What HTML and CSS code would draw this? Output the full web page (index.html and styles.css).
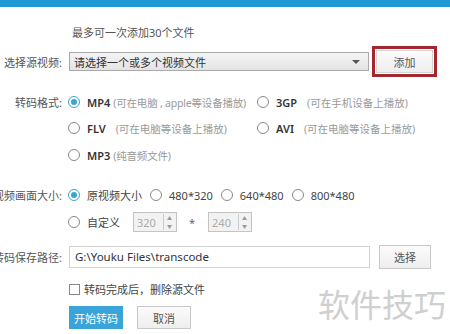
FILE: index.html
```html
<!DOCTYPE html>
<html lang="zh-CN">
<head>
  <meta charset="UTF-8">
  <title>视频转码</title>
  <link rel="stylesheet" href="styles.css">
</head>
<body>

  <div class="barre-haut"></div>

  <div class="page">
    <!-- indication -->
    <div class="ligne ligne-info">
      <span class="libelle"></span>
      <span class="info">最多可一次添加30个文件</span>
    </div>

    <!-- source -->
    <div class="ligne ligne-source">
      <span class="libelle">选择源视频:</span>
      <div class="select">
        <span>请选择一个或多个视频文件</span>
        <span class="fleche"></span>
      </div>
      <div class="cadre-rouge">
        <button class="btn btn-ajout">添加</button>
      </div>
    </div>

    <!-- formats -->
    <div class="ligne ligne-format">
      <span class="libelle">转码格式:</span>
      <div class="choix col1"><span class="radio coche"></span><b>MP4</b><em class="serre">(可在电脑 , apple等设备播放)</em></div>
      <div class="choix"><span class="radio"></span><b>3GP</b><em>(可在手机设备上播放)</em></div>
    </div>
    <div class="ligne ligne-format l2">
      <span class="libelle"></span>
      <div class="choix col1"><span class="radio"></span><b>FLV</b><em>(可在电脑等设备上播放)</em></div>
      <div class="choix"><span class="radio"></span><b>AVI</b><em>(可在电脑等设备上播放)</em></div>
    </div>
    <div class="ligne ligne-format l3">
      <span class="libelle"></span>
      <div class="choix col1"><span class="radio"></span><b>MP3</b><em class="serre">(纯音频文件)</em></div>
    </div>

    <!-- taille -->
    <div class="ligne ligne-taille">
      <span class="libelle">视频画面大小:</span>
      <div class="choix"><span class="radio coche"></span>原视频大小</div>
      <div class="choix"><span class="radio"></span>480*320</div>
      <div class="choix"><span class="radio"></span>640*480</div>
      <div class="choix"><span class="radio"></span>800*480</div>
    </div>
    <div class="ligne ligne-perso">
      <span class="libelle"></span>
      <div class="choix"><span class="radio"></span>自定义</div>
      <div class="spin"><span>320</span><span class="fleches"><i>▲</i><i>▼</i></span></div>
      <span class="fois">*</span>
      <div class="spin"><span>240</span><span class="fleches"><i>▲</i><i>▼</i></span></div>
    </div>

    <!-- chemin -->
    <div class="ligne ligne-chemin">
      <span class="libelle">转码保存路径:</span>
      <div class="champ">G:\Youku Files\transcode</div>
      <button class="btn btn-choisir">选择</button>
    </div>

    <div class="ligne ligne-case">
      <span class="libelle"></span>
      <span class="case"></span>
      <span>转码完成后，删除源文件</span>
    </div>

    <div class="ligne ligne-actions">
      <span class="libelle"></span>
      <button class="btn btn-go">开始转码</button>
      <button class="btn btn-annuler">取消</button>
    </div>
  </div>

  <div class="filigrane">软件技巧</div>

</body>
</html>
```

FILE: styles.css
```css
body {
  margin: 0;
  padding: 0;
  background-color: white;
  color: #444;
  font-family: "Noto Sans", "Noto Sans CJK SC", sans-serif;
  font-size: 11px;
  overflow: hidden;
  position: relative;
  height: 334px;
}

.barre-haut {
  height: 7px;
  background-color: #1d9ad6;
}

.ligne {
  display: flex;
  align-items: center;
  white-space: nowrap;
}

.libelle {
  width: 62px;
  flex-shrink: 0;
  display: flex;
  justify-content: flex-end;
  margin-right: 7px;
  color: #555;
}

.ligne-info {
  margin-top: 18px;
  height: 14px;
}

.info {
  margin-left: 3px;
  color: #555;
}

/* source */
.ligne-source {
  margin-top: 7px;
  height: 31px;
}

.select {
  width: 300px;
  height: 19px;
  box-sizing: border-box;
  border: 1px solid #a9a9a9;
  background: linear-gradient(#f4f4f4, #e4e4e4);
  display: flex;
  align-items: center;
  justify-content: space-between;
  padding: 0 8px 0 4px;
  color: #333;
}

.fleche {
  width: 0;
  height: 0;
  border-left: 4px solid transparent;
  border-right: 4px solid transparent;
  border-top: 4px solid #555;
}

.cadre-rouge {
  margin-left: 3px;
  width: 65px;
  height: 31px;
  box-sizing: border-box;
  border: 3px solid #a3272d;
  padding: 1px;
  display: flex;
}

.btn {
  font-family: inherit;
  font-size: 11px;
  border: 1px solid #c8c8c8;
  background: linear-gradient(#fbfbfb, #eeeeee);
  color: #555;
  padding: 0;
  cursor: pointer;
}

.btn-ajout {
  flex: 1;
  border-color: #d4d4d4;
}

/* formats */
.ligne-format {
  margin-top: 15px;
  height: 20px;
}

.ligne-format.l2 {
  margin-top: 6px;
}

.ligne-format.l3 {
  margin-top: 7px;
}

.choix {
  display: flex;
  align-items: center;
  color: #444;
}

.col1 {
  width: 189px;
}

.choix b {
  font-weight: 600;
  color: #333;
}

.choix em {
  font-style: normal;
  color: #9a9a9a;
  margin-left: 10px;
  font-size: 10.5px;
}

.choix em.serre {
  margin-left: 3px;
  letter-spacing: -0.2px;
}

.radio {
  width: 12px;
  height: 12px;
  box-sizing: border-box;
  border: 1px solid #888;
  border-radius: 50%;
  margin-left: -1px;
  margin-right: 7px;
  display: flex;
  align-items: center;
  justify-content: center;
  flex-shrink: 0;
}

.radio.coche {
  border-color: #3aa3d6;
}

.radio.coche::after {
  content: "";
  width: 6px;
  height: 6px;
  border-radius: 50%;
  background-color: #3aa3d6;
}

/* taille */
.ligne-taille {
  margin-top: 20px;
  height: 20px;
  gap: 9px;
}

.ligne-taille .libelle {
  margin-right: -2px;
}

.ligne-perso {
  margin-top: 7px;
  height: 20px;
}

.spin {
  margin-left: 13px;
  width: 44px;
  height: 20px;
  box-sizing: border-box;
  border: 1px solid #c4c4c4;
  background-color: #f2f2f2;
  color: #aaa;
  display: flex;
  align-items: center;
  justify-content: space-between;
  padding-left: 3px;
}

.fleches {
  width: 11px;
  height: 16px;
  border-left: 1px solid #ccc;
  display: flex;
  flex-direction: column;
  margin-right: 1px;
}

.fleches i {
  font-style: normal;
  font-size: 5px;
  line-height: 8px;
  text-align: center;
  color: #999;
}

.fois {
  margin-left: 12px;
  color: #666;
}

/* chemin */
.ligne-chemin {
  margin-top: 12px;
  height: 25px;
}

.champ {
  width: 301px;
  height: 22px;
  box-sizing: border-box;
  border: 1px solid #d2d2d2;
  padding-left: 5px;
  display: flex;
  align-items: center;
  color: #333;
  font-size: 11.5px;
}

.btn-choisir {
  margin-left: 9px;
  width: 52px;
  height: 24px;
}

.ligne-case {
  margin-top: 10px;
  height: 20px;
}

.case {
  width: 11px;
  height: 11px;
  box-sizing: border-box;
  border: 1px solid #888;
  margin-right: 4px;
}

.ligne-actions {
  margin-top: 7px;
  height: 23px;
}

.btn-go {
  width: 54px;
  height: 23px;
  background: #3aa3d8;
  border-color: #3aa3d8;
  color: white;
}

.btn-annuler {
  margin-left: 14px;
  width: 54px;
  height: 23px;
}

.filigrane {
  position: absolute;
  left: 318px;
  top: 280px;
  font-size: 32px;
  color: #cfcfcf;
  font-family: "Noto Sans CJK SC", sans-serif;
  letter-spacing: 0;
}
```
